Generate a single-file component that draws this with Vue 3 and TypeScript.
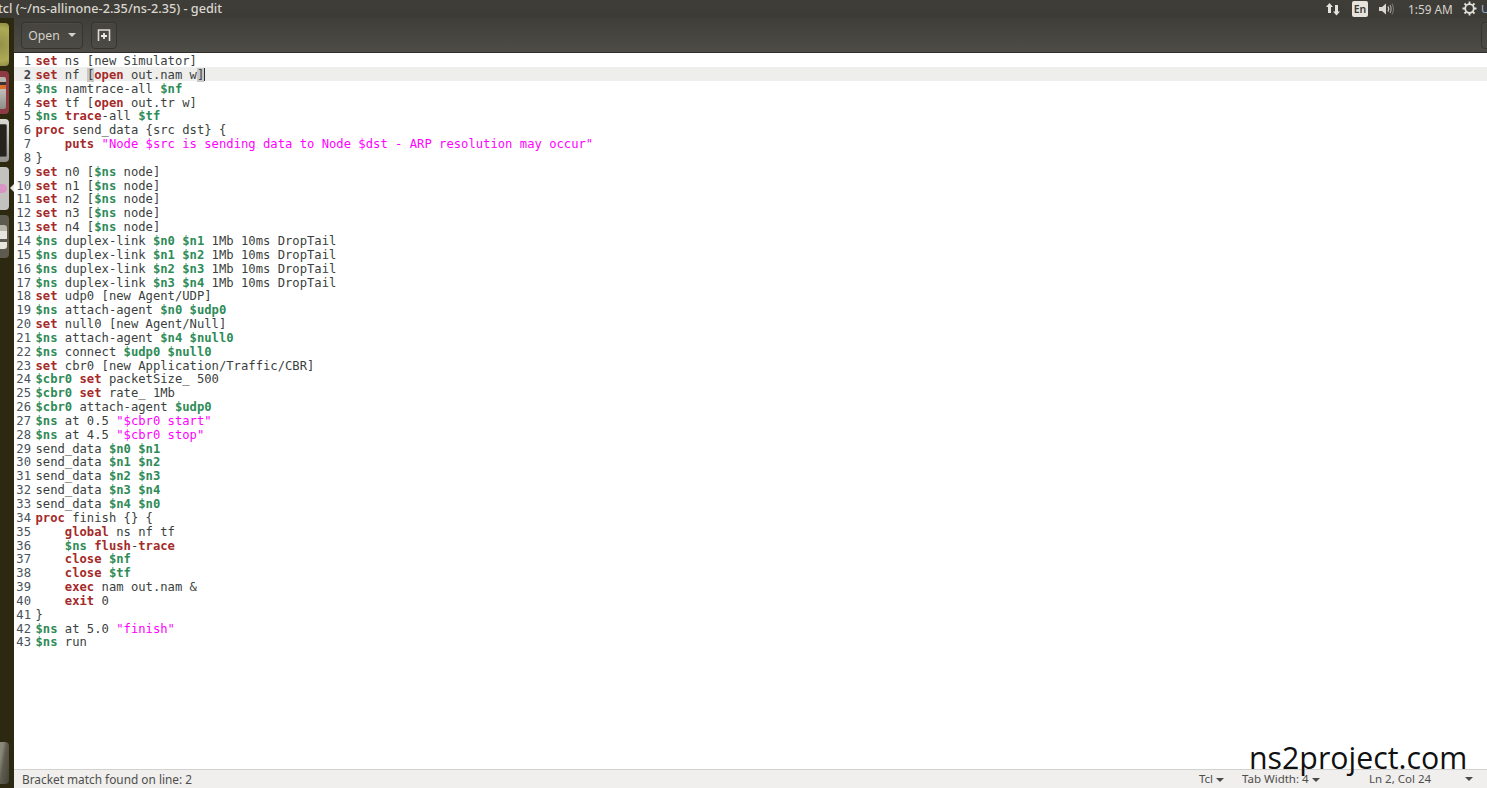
<script setup lang="ts">
const src: string[] = [
  '«k:set» ns [new Simulator]',
  '«k:set» nf «b:[»«k:open» out.nam w«b:]»«c:»',
  '«v:$ns» namtrace-all «v:$nf»',
  '«k:set» tf [«k:open» out.tr w]',
  '«v:$ns» «k:trace»-all «v:$tf»',
  '«k:proc» send_data {src dst} {',
  '    «k:puts» «s:"Node $src is sending data to Node $dst - ARP resolution may occur"»',
  '}',
  '«k:set» n0 [«v:$ns» node]',
  '«k:set» n1 [«v:$ns» node]',
  '«k:set» n2 [«v:$ns» node]',
  '«k:set» n3 [«v:$ns» node]',
  '«k:set» n4 [«v:$ns» node]',
  '«v:$ns» duplex-link «v:$n0» «v:$n1» 1Mb 10ms DropTail',
  '«v:$ns» duplex-link «v:$n1» «v:$n2» 1Mb 10ms DropTail',
  '«v:$ns» duplex-link «v:$n2» «v:$n3» 1Mb 10ms DropTail',
  '«v:$ns» duplex-link «v:$n3» «v:$n4» 1Mb 10ms DropTail',
  '«k:set» udp0 [new Agent/UDP]',
  '«v:$ns» attach-agent «v:$n0» «v:$udp0»',
  '«k:set» null0 [new Agent/Null]',
  '«v:$ns» attach-agent «v:$n4» «v:$null0»',
  '«v:$ns» connect «v:$udp0» «v:$null0»',
  '«k:set» cbr0 [new Application/Traffic/CBR]',
  '«v:$cbr0» «k:set» packetSize_ 500',
  '«v:$cbr0» «k:set» rate_ 1Mb',
  '«v:$cbr0» attach-agent «v:$udp0»',
  '«v:$ns» at 0.5 «s:"$cbr0 start"»',
  '«v:$ns» at 4.5 «s:"$cbr0 stop"»',
  'send_data «v:$n0» «v:$n1»',
  'send_data «v:$n1» «v:$n2»',
  'send_data «v:$n2» «v:$n3»',
  'send_data «v:$n3» «v:$n4»',
  'send_data «v:$n4» «v:$n0»',
  '«k:proc» finish {} {',
  '    «k:global» ns nf tf',
  '    «v:$ns» «k:flush»-«k:trace»',
  '    «k:close» «v:$nf»',
  '    «k:close» «v:$tf»',
  '    «k:exec» nam out.nam &',
  '    «k:exit» 0',
  '}',
  '«v:$ns» at 5.0 «s:"finish"»',
  '«v:$ns» run',
]

interface Tok { cls: string; text: string }

function tokens(line: string): Tok[] {
  return line
    .split(/(«[a-z]:[^»]*»)/)
    .filter((part) => part !== '')
    .map((part) =>
      part.startsWith('«')
        ? { cls: part[1], text: part.slice(3, -1) }
        : { cls: 'n', text: part },
    )
}

const lines = src.map((line, i) => ({ no: i + 1, toks: tokens(line), current: i === 1 }))
</script>

<template>
  <div class="screen">
    <header class="panel">
      <div class="title">tcl (~/ns-allinone-2.35/ns-2.35) - gedit</div>
      <div class="indicators">
        <svg class="ind-net" width="14" height="14" viewBox="0 0 14 14">
          <path d="M3.5 1 L7 5 H5 V11 H2 V5 H0 Z" fill="#e4e2dc" />
          <path d="M10.5 13.5 L14 9.5 H12 V3 H9 V9.5 H7 Z" fill="#e4e2dc" />
        </svg>
        <span class="ind-lang">En</span>
        <svg class="ind-vol" width="16" height="14" viewBox="0 0 16 14">
          <path d="M0 5 H3 L7 1.5 V12.5 L3 9 H0 Z" fill="#d9d7d0" />
          <path d="M9 4.5 Q10.5 7 9 9.5" fill="none" stroke="#d9d7d0" stroke-width="1.2" />
          <path d="M11 3 Q13.2 7 11 11" fill="none" stroke="#aaa8a1" stroke-width="1.1" />
          <path d="M13 1.5 Q16 7 13 12.5" fill="none" stroke="#77756f" stroke-width="1.1" />
        </svg>
        <span class="ind-time">1:59 AM</span>
        <svg class="ind-gear" width="15" height="15" viewBox="0 0 15 15">
          <circle cx="7.5" cy="7.5" r="4.3" fill="none" stroke="#e4e2dc" stroke-width="1.8" />
          <path d="M7.5 0.5 V3 M7.5 12 V14.5 M0.5 7.5 H3 M12 7.5 H14.5 M2.5 2.5 L4.2 4.2 M10.8 10.8 L12.5 12.5 M12.5 2.5 L10.8 4.2 M4.2 10.8 L2.5 12.5" stroke="#e4e2dc" stroke-width="1.8" />
        </svg>
        <span class="ind-user">U</span>
      </div>
    </header>

    <div class="body">
      <aside class="launcher">
        <div class="tile t-olive"></div>
        <div class="tile t-red"><span class="t-red-in"></span></div>
        <div class="tile t-term"><span class="t-term-in"></span></div>
        <div class="tile-row">
          <div class="tile t-light"><span class="t-light-in"></span></div>
          <span class="pip"></span>
        </div>
        <div class="tile t-dark"><span class="t-dark-in"></span></div>
        <div class="spring"></div>
        <div class="tile t-trash"></div>
      </aside>

      <main class="window">
        <div class="toolbar">
          <button class="btn open">
            <span>Open</span>
            <i class="caret light"></i>
          </button>
          <button class="btn newdoc">
            <svg width="14" height="13" viewBox="0 0 14 13">
              <path d="M1.5 12 V1 H12.5 V12" fill="none" stroke="#dddbd4" stroke-width="1.6" />
              <path d="M7 4 V10 M4 7 H10" stroke="#eeece6" stroke-width="1.8" />
            </svg>
          </button>
          <div class="spacer"></div>
          <button class="btn menu"></button>
        </div>

        <div class="editor">
          <div v-for="line in lines" :key="line.no" class="line" :class="{ current: line.current }">
            <span class="no">{{ line.no }}</span>
            <span class="code"><span v-for="(t, i) in line.toks" :key="i" :class="t.cls">{{ t.text }}</span></span>
          </div>
        </div>

        <footer class="status">
          <span class="msg">Bracket match found on line: 2</span>
          <span class="st st-lang">Tcl <i class="caret"></i></span>
          <span class="st st-tab">Tab Width: 4 <i class="caret"></i></span>
          <span class="st st-pos">Ln 2, Col 24</span>
          <i class="caret st-more"></i>
        </footer>
      </main>
    </div>

    <div class="watermark">ns2project.com</div>
  </div>
</template>

<style>
html,
body {
  margin: 0;
  overflow: hidden;
  background: #fff;
}
</style>

<style scoped>
.screen {
  position: relative;
  width: 1487px;
  height: 788px;
  display: flex;
  flex-direction: column;
  overflow: hidden;
  font-family: "Noto Sans", "Open Sans", sans-serif;
}

/* top panel */
.panel {
  height: 18px;
  flex: none;
  display: flex;
  align-items: center;
  justify-content: space-between;
  background: linear-gradient(#3f3d38, #3d3b36);
  color: #d9d7d0;
  overflow: hidden;
}
.title {
  margin-left: -2px;
  font-size: 12.7px;
  font-weight: 500;
  white-space: nowrap;
  line-height: 16px;
  padding-bottom: 3px;
}
.indicators {
  display: flex;
  align-items: center;
  margin-right: -5px;
  padding-bottom: 1px;
}
.ind-net { margin-right: 12px; }
.ind-lang {
  width: 16px;
  height: 16px;
  margin-right: 11px;
  border-radius: 2px;
  background: #e6e4dd;
  color: #3c3b37;
  font-size: 10.5px;
  font-weight: 600;
  line-height: 16px;
  text-align: center;
}
.ind-vol { margin-right: 13px; }
.ind-time {
  width: 44px;
  margin-right: 10px;
  font-size: 11.8px;
  white-space: nowrap;
  color: #d4d2cb;
}
.ind-gear { margin-right: 4px; }
.ind-user {
  width: 11px;
  font-size: 11.5px;
  color: #9db8d8;
}

.body {
  flex: 1;
  min-height: 0;
  display: flex;
}

/* launcher */
.launcher {
  width: 14px;
  flex: none;
  display: flex;
  flex-direction: column;
  align-items: flex-start;
  gap: 5px;
  padding: 5px 0 4px;
  box-sizing: border-box;
  background: #2d2810;
  overflow: hidden;
}
.tile-row {
  display: flex;
  align-items: center;
  position: relative;
  width: 14px;
}
.tile {
  flex: none;
  width: 9px;
  height: 43px;
  border-radius: 0 4px 4px 0;
  display: flex;
  align-items: center;
  overflow: hidden;
}
.spring { flex: 1; }
.t-olive { background: radial-gradient(circle at 0 50%, #94904a, #aeaa55 70%, #8d8a44); }
.t-red { background: #8e3a42; }
.t-red-in {
  width: 6px;
  height: 32px;
  background: linear-gradient(#b9b6b0 0 16%, #3a3230 16% 24%, #d86f2a 24% 38%, #c2bfb9 38%, #8f8d88 100%);
  border-radius: 0 2px 2px 0;
}
.t-term { background: linear-gradient(#dcdad5, #908e8a); }
.t-term-in {
  width: 6px;
  height: 31px;
  background: #26231f;
  border: solid #55534e;
  border-width: 1px 1px 1px 0;
  border-radius: 0 2px 2px 0;
}
.t-light { background: #c4c2be; }
.t-light-in {
  width: 7px;
  height: 9px;
  border-radius: 0 5px 5px 0;
  background: #d894c4;
}
.pip {
  position: absolute;
  left: 10px;
  top: 17px;
  width: 0;
  height: 0;
  border: 4px solid transparent;
  border-left: 0;
  border-right: 4px solid #e8e6e0;
}
.t-dark { background: #5d5a50; }
.t-dark-in {
  width: 7px;
  height: 24px;
  background: linear-gradient(#b8b5aa 0 25%, #e8e5dc 25% 60%, #5d5a50 60% 70%, #e8e5dc 70%);
  border-radius: 0 3px 3px 0;
}
.t-trash {
  height: 42px;
  background: linear-gradient(100deg, #8a8878 0 20%, #5e5c4e 45%, #45433a);
}

/* window */
.window {
  flex: 1;
  min-width: 0;
  display: flex;
  flex-direction: column;
}
.toolbar {
  height: 35px;
  flex: none;
  box-sizing: border-box;
  display: flex;
  align-items: center;
  gap: 8px;
  padding: 3px 0 3px 7px;
  background: linear-gradient(#403e39, #4e4c46);
  border-bottom: 1px solid #2f2e2a;
}
.spacer { flex: 1; }
.btn {
  height: 27px;
  box-sizing: border-box;
  border: 1px solid #35342f;
  border-radius: 4px;
  background: linear-gradient(#46443e, #4d4b45);
  box-shadow: inset 0 1px 0 rgba(255, 255, 255, 0.04);
  display: flex;
  align-items: center;
  justify-content: center;
  padding: 0;
  color: #d4d2cb;
  font-family: inherit;
  font-size: 12.2px;
}
.open {
  width: 62px;
  gap: 8px;
}
.newdoc { width: 26px; }
.menu {
  width: 30px;
  margin-right: -24px;
}
.caret {
  display: inline-block;
  width: 0;
  height: 0;
  border-left: 4px solid transparent;
  border-right: 4px solid transparent;
  border-top: 4px solid #4b4a47;
  vertical-align: 1px;
}
.caret.light {
  border-top-color: #d4d2cb;
}

/* editor */
.editor {
  flex: 1;
  min-height: 0;
  background: #fff;
  font-family: "DejaVu Sans Mono", monospace;
  font-size: 12.2px;
  color: #3b3f40;
  overflow: hidden;
}
.line {
  height: 13.857px;
  display: flex;
  align-items: flex-start;
  white-space: pre;
}
.no,
.code {
  line-height: 17.4px;
}
.line.current {
  background: #eeeeec;
}
.no {
  width: 17px;
  flex: none;
  text-align: right;
  color: #47525c;
}
.current .no {
  font-weight: 700;
  color: #3b4046;
}
.code {
  margin-left: 4.5px;
}
.k {
  font-weight: 700;
  color: #a52a2a;
}
.v {
  font-weight: 700;
  color: #2e8b57;
}
.s {
  color: #ff00ff;
}
.b {
  background: #c8c8c8;
}
.c {
  display: inline-block;
  width: 1px;
  height: 13px;
  background: #2e3436;
  vertical-align: -2px;
}

/* statusbar */
.status {
  height: 19px;
  flex: none;
  box-sizing: border-box;
  display: flex;
  align-items: center;
  padding-bottom: 1px;
  border-top: 1px solid #d3d2cf;
  background: #f0efed;
  color: #4e4e4b;
  font-size: 11.5px;
  white-space: nowrap;
}
.msg {
  margin-left: 8px;
  width: 1177px;
  flex: none;
  font-size: 11.85px;
}
.st-lang { width: 43px; flex: none; }
.st-tab { width: 127px; flex: none; }
.st-pos { width: 96px; flex: none; }
.st-more { flex: none; }

/* watermark */
.watermark {
  position: absolute;
  left: 1249px;
  top: 738px;
  font-family: "Open Sans", sans-serif;
  font-size: 30.3px;
  line-height: 40px;
  color: #111;
  white-space: nowrap;
}
</style>
